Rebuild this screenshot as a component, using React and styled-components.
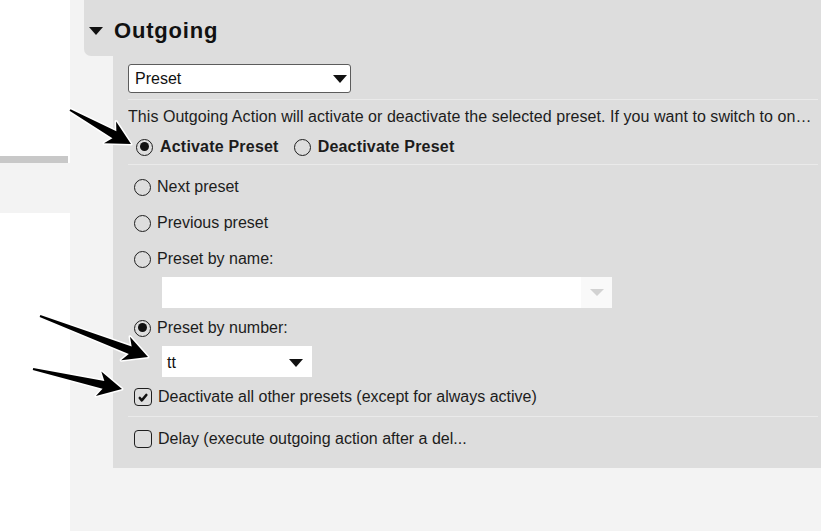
import React from "react";
import styled, { createGlobalStyle } from "styled-components";

const GlobalStyle = createGlobalStyle`
  html, body {
    margin: 0;
    padding: 0;
    background: #ffffff;
    overflow: hidden;
  }
  body {
    font-family: "Liberation Sans", Arial, sans-serif;
    color: #1c1c1c;
  }
`;

const arrows = [
  { from: [70, 110], to: [131, 144] },
  { from: [40, 316], to: [148, 357] },
  { from: [33, 369], to: [122, 389] },
];

function Arrow({ from, to }) {
  const dx = to[0] - from[0];
  const dy = to[1] - from[1];
  const len = Math.sqrt(dx * dx + dy * dy);
  const deg = (Math.atan2(dy, dx) * 180) / Math.PI;
  const L = len;
  const pts = [
    [0, -1],
    [L - 19, -4],
    [L - 24, -12.5],
    [L, 0],
    [L - 24, 12.5],
    [L - 19, 4],
    [0, 1],
  ]
    .map((p) => p.join(","))
    .join(" ");

  return (
    <g transform={`translate(${from[0]} ${from[1]}) rotate(${deg})`}>
      <polygon
        points={pts}
        fill="#000"
        stroke="#fff"
        strokeWidth="3"
        strokeLinejoin="round"
        paintOrder="stroke"
      />
    </g>
  );
}

function Radio({ checked, bold, children, $mt }) {
  return (
    <OptionRow $mt={$mt}>
      <RadioDot $checked={checked} />
      <OptionLabel $bold={bold}>{children}</OptionLabel>
    </OptionRow>
  );
}

function Check({ checked, children, $mt }) {
  return (
    <OptionRow $mt={$mt}>
      <CheckBox>
        {checked && (
          <svg width="14" height="14" viewBox="0 0 14 14">
            <path d="M3.8 8 L5.8 10.3 L10.3 5" fill="none" stroke="#111" strokeWidth="2.6" strokeLinecap="round" strokeLinejoin="round" />
          </svg>
        )}
      </CheckBox>
      <OptionLabel>{children}</OptionLabel>
    </OptionRow>
  );
}

export default function App() {
  return (
    <>
      <GlobalStyle />
      <Page>
        <Sidebar>
          <SideBar />
          <SideItem />
        </Sidebar>

        <Main>
          <PanelHeader>
            <Caret />
            <Title>Outgoing</Title>
          </PanelHeader>

          <PanelBody>
            <Section>
              <TypeSelect>
                <span>Preset</span>
                <Triangle />
              </TypeSelect>
            </Section>

            <Description>
              This Outgoing Action will activate or deactivate the selected preset. If you want to switch to one specific preset, use the options below.
            </Description>

            <ChoiceRow>
              <Radio checked bold>Activate Preset</Radio>
              <Radio bold>Deactivate Preset</Radio>
            </ChoiceRow>

            <OptionList>
              <Radio $mt={0}>Next preset</Radio>
              <Radio $mt={16}>Previous preset</Radio>
              <Radio $mt={16}>Preset by name:</Radio>
              <NameSelect>
                <ArrowBox>
                  <Triangle $light />
                </ArrowBox>
              </NameSelect>
              <Radio checked $mt={10}>Preset by number:</Radio>
              <NumberSelect>
                <span>tt</span>
                <Triangle />
              </NumberSelect>
              <Check checked $mt={10}>Deactivate all other presets (except for always active)</Check>
            </OptionList>

            <DelaySection>
              <Check>Delay (execute outgoing action after a del...</Check>
            </DelaySection>
          </PanelBody>
        </Main>

        <Overlay width="821" height="531" viewBox="0 0 821 531">
          {arrows.map((a, i) => (
            <Arrow key={i} from={a.from} to={a.to} />
          ))}
        </Overlay>
      </Page>
    </>
  );
}

const Page = styled.div`
  position: relative;
  display: grid;
  grid-template-columns: 70px minmax(0, 1fr);
  width: 821px;
  height: 531px;
  overflow: hidden;
`;

const Sidebar = styled.div`
  background: #ffffff;
  padding-top: 156px;
`;

const SideBar = styled.div`
  width: 68px;
  height: 7px;
  background: #c8c8c8;
`;

const SideItem = styled.div`
  height: 50px;
  background: #f3f3f3;
`;

const Main = styled.div`
  min-width: 0;
  background: #f3f3f3;
  padding-left: 14px;
  display: flex;
  flex-direction: column;
`;

const PanelHeader = styled.div`
  height: 56px;
  background: #dddddd;
  border-bottom-left-radius: 7px;
  display: flex;
  align-items: center;
  gap: 11px;
  padding: 5px 0 0 5px;
  box-sizing: border-box;
`;

const Caret = styled.div`
  width: 0;
  height: 0;
  border-left: 7.5px solid transparent;
  border-right: 7.5px solid transparent;
  border-top: 8px solid #111;
`;

const Title = styled.h2`
  margin: 0;
  font-size: 22px;
  font-weight: bold;
  letter-spacing: 0.8px;
  color: #111;
`;

const PanelBody = styled.div`
  min-width: 0;
  margin-left: 29px;
  background: #dddddd;
  padding: 8px 3px 19px 15px;
`;

const Section = styled.div`
  padding-bottom: 6px;
  border-bottom: 1px solid #eaeaea;
`;

const Triangle = styled.div`
  width: 0;
  height: 0;
  border-left: ${(p) => (p.$light ? 7 : 7.5)}px solid transparent;
  border-right: ${(p) => (p.$light ? 7 : 7.5)}px solid transparent;
  border-top: ${(p) => (p.$light ? 7 : 8)}px solid ${(p) => (p.$light ? "#d2d2d2" : "#111")};
`;

const TypeSelect = styled.div`
  width: 223px;
  height: 29px;
  box-sizing: border-box;
  border: 1px solid #5c5c5c;
  border-radius: 3px;
  background: #fff;
  display: flex;
  align-items: center;
  justify-content: space-between;
  padding: 0 3px 0 6px;
  font-size: 16px;
  color: #111;
`;

const Description = styled.div`
  margin-top: 8px;
  font-size: 16px;
  line-height: 18px;
  letter-spacing: 0.05px;
  white-space: nowrap;
  overflow: hidden;
  text-overflow: ellipsis;
`;

const ChoiceRow = styled.div`
  display: flex;
  gap: 15px;
  margin-top: 11px;
  padding: 0 0 7px 8px;
  border-bottom: 1px solid #eaeaea;
`;

const OptionList = styled.div`
  display: flex;
  flex-direction: column;
  align-items: flex-start;
  padding: 12px 0 9px 6px;
  border-bottom: 1px solid #eaeaea;
`;

const OptionRow = styled.div`
  display: flex;
  align-items: center;
  gap: 6px;
  height: 20px;
  margin-top: ${(p) => p.$mt || 0}px;
`;

const RadioDot = styled.span`
  position: relative;
  width: 17px;
  height: 17px;
  box-sizing: border-box;
  border: 1.5px solid #1e1e1e;
  border-radius: 50%;
  flex-shrink: 0;

  &::after {
    content: "";
    display: ${(p) => (p.$checked ? "block" : "none")};
    position: absolute;
    left: 2.5px;
    top: 2.5px;
    width: 9px;
    height: 9px;
    border-radius: 50%;
    background: #111;
  }
`;

const CheckBox = styled.span`
  width: 18px;
  height: 18px;
  box-sizing: border-box;
  border: 1.8px solid #1e1e1e;
  border-radius: 4px;
  display: flex;
  align-items: center;
  justify-content: center;
  flex-shrink: 0;
`;

const OptionLabel = styled.span`
  font-size: 16px;
  font-weight: ${(p) => (p.$bold ? "bold" : "normal")};
  letter-spacing: ${(p) => (p.$bold ? 0.2 : 0)}px;
  line-height: 20px;
  white-space: nowrap;
  color: #1c1c1c;
  margin-left: ${(p) => (p.$bold ? 1 : 0)}px;
`;

const NameSelect = styled.div`
  margin: 8px 0 0 28px;
  width: 450px;
  height: 31px;
  background: #fff;
  display: flex;
  justify-content: flex-end;
`;

const ArrowBox = styled.div`
  width: 31px;
  background: #f9f9f9;
  display: flex;
  align-items: center;
  justify-content: center;
`;

const NumberSelect = styled.div`
  margin: 8px 0 0 28px;
  width: 150px;
  height: 31px;
  box-sizing: border-box;
  background: #fff;
  display: flex;
  align-items: center;
  justify-content: space-between;
  padding: 2px 9px 0 5px;
  font-size: 16px;
  color: #111;
`;

const DelaySection = styled.div`
  padding: 12px 0 0 6px;
`;

const Overlay = styled.svg`
  position: absolute;
  left: 0;
  top: 0;
  pointer-events: none;
`;
